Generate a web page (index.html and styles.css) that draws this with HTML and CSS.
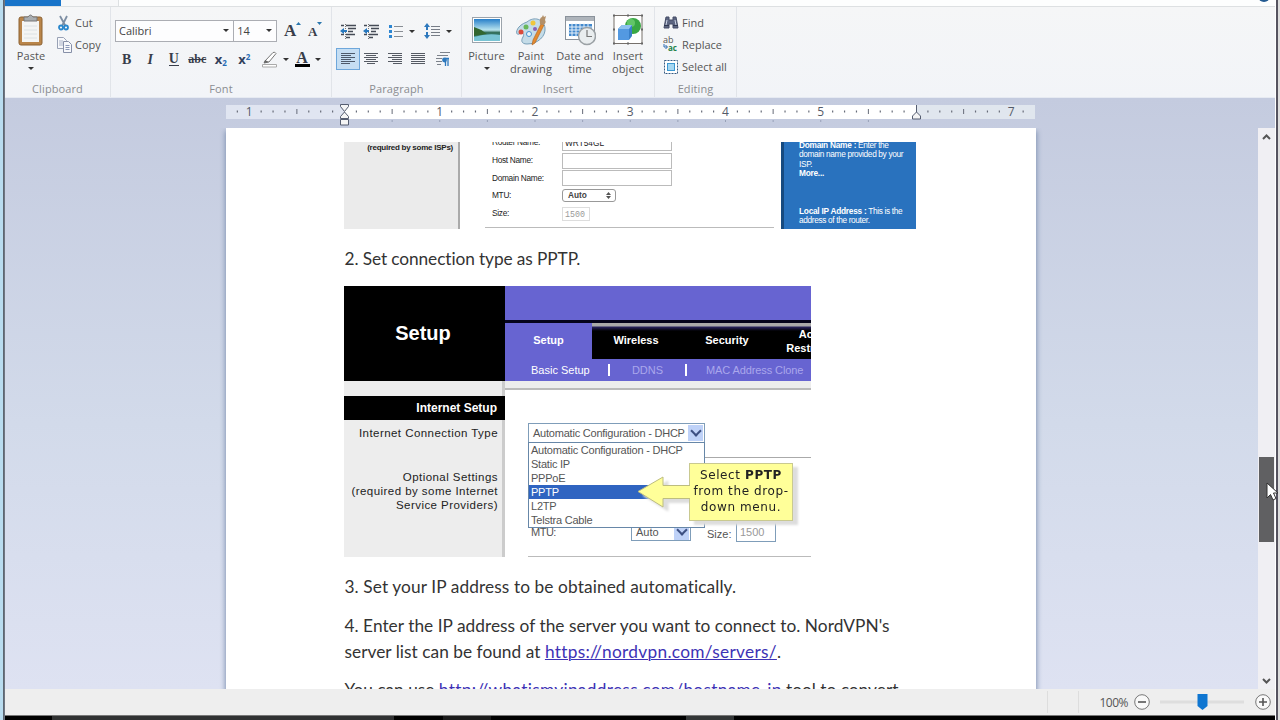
FILE: index.html
```html
<!DOCTYPE html>
<html lang="en">
<head>
	<meta charset="UTF-8">
	<title>Document</title>
	<link rel="stylesheet" href="styles.css">
</head>
<body>
	<div class="desktop">
		<div class="window">
			<div class="tabs"><span class="file-tab"></span><span class="home-tab"></span><span class="help"></span></div>
			<div class="ribbon">
				<div class="group clipboard">
					<div class="tools">
						<div class="big paste">
							<svg width="28" height="32" viewBox="0 0 28 32"><rect x="2" y="3" width="23" height="28" rx="2" fill="#b9854a" stroke="#8d6233"/><rect x="5" y="7" width="17" height="21" fill="#f4f5f4"/><path d="M7 12h13M7 16h13M7 20h13M7 24h13" stroke="#dce2e4"/><path d="M7 7V3h4q2.500-4 5 0h4v4z" fill="#a9adb0" stroke="#777"/></svg>
							<span>Paste</span><i class="caret"></i>
						</div>
						<div class="small-list">
							<div class="small"><svg width="16" height="16" viewBox="0 0 16 16"><path d="M3 1l5.500 10M10 1L5 11" stroke="#7d8ea3" stroke-width="1.800" fill="none"/><circle cx="4" cy="12.500" r="2" fill="none" stroke="#2a87cc" stroke-width="1.800"/><circle cx="9" cy="12.500" r="2" fill="none" stroke="#2a87cc" stroke-width="1.800"/></svg><span>Cut</span></div>
							<div class="small"><svg width="16" height="16" viewBox="0 0 16 16"><path d="M.5.500h6l3 3v8h-9z" fill="#f7f8fb" stroke="#98a1b5"/><path d="M2 4h4M2 6h4M2 8h4" stroke="#aab3c8"/><path d="M6.500 4.500h5l3 3v8h-8z" fill="#f7f8fb" stroke="#8790a8"/><path d="M8.500 8.500h4M8.500 10.500h4M8.500 12.500h4" stroke="#8b98b8"/></svg><span>Copy</span></div>
						</div>
					</div>
					<div class="label">Clipboard</div>
				</div>
				<div class="group font">
					<div class="tools">
						<div class="row">
							<div class="combo family">Calibri<i class="caret"></i></div>
							<div class="combo size">14<i class="caret"></i></div>
							<div class="btn grow"><b class="serif">A</b><svg width="5" height="3" viewBox="0 0 5 3"><path d="M0 3L2.500 0 5 3z" fill="#2a76ad"/></svg></div>
							<div class="btn shrink"><b class="serif">A</b><svg width="5" height="3" viewBox="0 0 5 3"><path d="M0 0h5L2.500 3z" fill="#2a76ad"/></svg></div>
						</div>
						<div class="row">
							<div class="btn serif"><b>B</b></div>
							<div class="btn serif"><b><i>I</i></b></div>
							<div class="btn serif under"><b>U</b></div>
							<div class="btn serif strike">abc</div>
							<div class="btn script"><b>x</b><sub>2</sub></div>
							<div class="btn script"><b>x</b><sup>2</sup></div>
							<div class="btn pen"><svg width="17" height="17" viewBox="0 0 17 17"><path d="M4 10L12 1.500q2-1 3 1L8 11l-5 1z" fill="#fff" stroke="#777"/><path d="M4 9l4 2-5 1z" fill="#666"/><path d="M1.500 13.500h14v2.500h-14z" fill="#fff" stroke="#aaa"/></svg><i class="caret"></i></div>
							<div class="btn color"><b class="serif">A</b><i class="caret"></i></div>
						</div>
					</div>
					<div class="label">Font</div>
				</div>
				<div class="group paragraph">
					<div class="tools">
						<div class="row">
							<div class="btn"><svg width="16" height="15" viewBox="0 0 16 15"><path d="M1 1.500h3M6 1.500h10M8 4.500h8M8 7.500h5M6 10.500h9M1 10.500h3M6 13.500h4" stroke="#454b56" stroke-width="1.400"/><path d="M5.500 0v15" stroke="#777" stroke-dasharray="1 1"/><path d="M0 7l4-3v2h3v2H4v2z" fill="#2878bd"/></svg></div>
							<div class="btn"><svg width="16" height="15" viewBox="0 0 16 15"><path d="M1 1.500h3M6 1.500h10M8 4.500h8M8 7.500h5M6 10.500h9M1 10.500h3M6 13.500h4" stroke="#454b56" stroke-width="1.400"/><path d="M5.500 0v15" stroke="#777" stroke-dasharray="1 1"/><path d="M0 7l4-3v2h2v2H4v2z" fill="#2878bd"/></svg></div>
							<div class="btn list"><svg width="15" height="15" viewBox="0 0 15 15"><path d="M1 2.500h3M1 7.500h3M1 12.500h3" stroke="#2d86d2" stroke-width="3"/><path d="M6 2.500h9M6 7.500h9M6 12.500h9" stroke="#888d94"/></svg><i class="caret"></i></div>
							<div class="btn spacing"><svg width="16" height="16" viewBox="0 0 16 16"><path d="M3 0l3 4H4v8h2l-3 4-3-4h2V4H0z" fill="#2d78bd"/><path d="M1 8h4" stroke="#f4f5f8" stroke-width="2"/><path d="M7 3.500h9M7 6.500h9M7 9.500h9M7 12.500h9" stroke="#777d87"/></svg><i class="caret"></i></div>
						</div>
						<div class="row">
							<div class="btn active"><svg width="14" height="12" viewBox="0 0 14 12"><path d="M0 .5h14M0 2.500h10M0 4.500h14M0 6.500h10M0 8.500h14M0 10.500h9" stroke="#4d5a6b"/></svg></div>
							<div class="btn"><svg width="14" height="12" viewBox="0 0 14 12"><path d="M0 .5h14M2 2.500h10M0 4.500h14M2 6.500h10M0 8.500h14M3 10.500h8" stroke="#555a63"/></svg></div>
							<div class="btn"><svg width="14" height="12" viewBox="0 0 14 12"><path d="M0 .5h14M4 2.500h10M0 4.500h14M4 6.500h10M0 8.500h14M5 10.500h9" stroke="#555a63"/></svg></div>
							<div class="btn"><svg width="14" height="12" viewBox="0 0 14 12"><path d="M0 .5h14M0 2.500h14M0 4.500h14M0 6.500h14M0 8.500h14M0 10.500h14" stroke="#555a63"/></svg></div>
							<div class="btn pilcrow"><svg width="14" height="15" viewBox="0 0 14 15"><path d="M4 .5h10M1 3.500h11M0 6.500h6M0 9.500h6M1 12.500h4" stroke="#7c828b"/><path d="M12 6v8M9.500 6v8M13 6.500H9" stroke="#2d78bd" stroke-width="1.300"/><circle cx="8.500" cy="8" r="2.400" fill="#2d78bd"/></svg></div>
						</div>
					</div>
					<div class="label">Paragraph</div>
				</div>
				<div class="group insert">
					<div class="tools">
						<div class="big picture">
							<svg width="30" height="32" viewBox="0 0 30 32"><defs><linearGradient id="sky" x2="0" y2="1"><stop offset="0" stop-color="#277fc9"/><stop offset=".5" stop-color="#b9e4ef"/><stop offset=".62" stop-color="#2f6a54"/><stop offset="1" stop-color="#5eb7ca"/></linearGradient></defs><rect x=".5" y="3.500" width="29" height="25" fill="#fff" stroke="#9ba3ab"/><rect x="2" y="5" width="26" height="22" fill="url(#sky)"/><path d="M2 13q7 2 13 7l-13 2z" fill="#32662f"/><path d="M2 23q13-4 26-2v6H2z" fill="#79c4d4"/></svg>
							<span>Picture</span><i class="caret"></i>
						</div>
						<div class="big paint">
							<svg width="32" height="32" viewBox="0 0 32 32"><path d="M12 8C19 2 29 5 30 14c1 8-7 16-18 16-6 0-6-4-4-7 2-4-1-5-4-3-4 2-4-8 8-12z" fill="#c4dce8" stroke="#789eb7"/><circle cx="11" cy="13" r="2.500" fill="#69b85b"/><circle cx="18" cy="9" r="2.500" fill="#f0c63c"/><circle cx="6" cy="18" r="2.500" fill="#db4a3a"/><circle cx="14" cy="20" r="2.500" fill="#eaf5fb" stroke="#4893ce"/><circle cx="20" cy="15" r="2" fill="#8a5fb5"/><path d="M26 10l3 1-9 18-3 2 1-5z" fill="#e58a2e" stroke="#a8601d" stroke-width=".6"/><path d="M25 10q-1-6 2-7l1-2 1 2 2-1-1 4q2 3-2 5z" fill="#b39069"/></svg>
							<span>Paint<br>drawing</span>
						</div>
						<div class="big date">
							<svg width="32" height="32" viewBox="0 0 32 32"><rect x="1.500" y="2.500" width="29" height="23" fill="#fff" stroke="#8a929b"/><rect x="2" y="3" width="28" height="4" fill="#aeb4bb"/><path d="M5 10h23v12H5z" fill="#4389cd"/><path d="M4 13h25M4 16h25M4 19h25M8 9v14M12 9v14M16 9v14M20 9v14M24 9v14" stroke="#e7f1fa"/><circle cx="23" cy="22" r="8.500" fill="#e9edef" stroke="#9ba1a5" stroke-width="1.500"/><path d="M23 16v6.500h5" fill="none" stroke="#777" stroke-width="1.200"/></svg>
							<span>Date and<br>time</span>
						</div>
						<div class="big object">
							<svg width="32" height="32" viewBox="0 0 32 32"><rect x="2" y="1.500" width="28" height="28" fill="#fff" stroke="#76706b"/><circle cx="21" cy="12" r="8" fill="#39a744"/><circle cx="19" cy="9" r="4" fill="#62c568"/><path d="M6 15l4-4h10v11l-3 4H6z" fill="#397fc8"/><path d="M6 15h11v11H6z" fill="#5399e1"/><path d="M6 15l4-4h10l-3 4z" fill="#8dc1ef"/><path d="M1 .500h2v2H1zM29 .500h2v2h-2zM1 28.500h2v2H1zM29 28.500h2v2h-2zM15 .500h2v2h-2zM15 28.500h2v2h-2zM1 14.500h2v2H1zM29 14.500h2v2h-2z" fill="#666"/></svg>
							<span>Insert<br>object</span>
						</div>
					</div>
					<div class="label">Insert</div>
				</div>
				<div class="group editing">
					<div class="tools small-list">
						<div class="small"><svg width="16" height="16" viewBox="0 0 16 16"><path d="M3 2h3v3h4V2h3l2 11h-5v-4H6v4H1z" fill="#5c6581" stroke="#444c66"/><path d="M4 5L3 10M12 5l1 5" stroke="#cdd5e5"/><path d="M1 10.500h5M10 10.500h5" stroke="#303850"/></svg><span>Find</span></div>
						<div class="small"><span class="ab-ac"><span>ab</span><span class="ac"><svg width="5" height="6" viewBox="0 0 5 6"><path d="M1 0v3h3M2.500 1l2 2-2 2" fill="none" stroke="#2d6bb0"/></svg><b>ac</b></span></span><span>Replace</span></div>
						<div class="small"><svg width="16" height="16" viewBox="0 0 16 16"><rect x="1.500" y="1.500" width="13" height="13" fill="#fff" stroke="#355a82" stroke-dasharray="2 1"/><rect x="4.500" y="4.500" width="7" height="7" fill="#a5d7f2" stroke="#3b97d0"/></svg><span>Select all</span></div>
					</div>
					<div class="label">Editing</div>
				</div>
			</div>
			<div class="workspace">
				<div class="editor">
					<svg class="ruler" id="ruler" width="810" height="24"></svg>
					<div class="page">
						<div class="shot basic">
							<div class="side">(required by some ISPs)</div>
							<div class="fields">
								<div class="field"><span>Router Name:</span><span class="input">WRT54GL</span></div>
								<div class="field"><span>Host Name:</span><span class="input"></span></div>
								<div class="field"><span>Domain Name:</span><span class="input"></span></div>
								<div class="field"><span>MTU:</span><span class="auto">Auto<svg width="5" height="7" viewBox="0 0 5 7"><path d="M0 3L2.500 0 5 3zM0 4h5L2.500 7z" fill="#555"/></svg></span></div>
								<div class="field"><span>Size:</span><span class="input mono">1500</span></div>
							</div>
							<div class="tips">
								<p><b>Domain Name :</b> Enter the<br>domain name provided by your<br>ISP.<br><b>More...</b></p>
								<p><b>Local IP Address :</b> This is the<br>address of the router.</p>
							</div>
						</div>
						<p class="step-2">2. Set connection type as PPTP.</p>
						<div class="shot router">
							<div class="head">
								<div class="title">Setup</div>
								<div class="nav">
									<div class="banner"></div>
									<div class="main-nav"><span class="on">Setup</span><span class="wireless">Wireless</span><span class="security">Security</span><span class="access">Access<br>Restrictions</span></div>
									<div class="sub-nav"><span class="basic-tab">Basic Setup</span><i></i><span class="ddns">DDNS</span><i></i><span class="mac">MAC Address Clone</span></div>
								</div>
							</div>
							<div class="content">
								<div class="left">
									<h4>Internet Setup</h4>
									<p>Internet Connection Type</p>
									<p class="optional">Optional Settings<br>(required by some Internet<br>Service Providers)</p>
								</div>
								<div class="right">
									<div class="select type"><span>Automatic Configuration - DHCP</span><i class="arrow"></i></div>
									<hr>
									<div class="mtu"><span class="mtu-name">MTU:</span><div class="select"><span>Auto</span><i class="arrow"></i></div><span class="size-name">Size:</span><span class="size-value">1500</span></div>
									<ul class="menu">
										<li>Automatic Configuration - DHCP</li>
										<li>Static IP</li>
										<li>PPPoE</li>
										<li class="picked">PPTP</li>
										<li>L2TP</li>
										<li>Telstra Cable</li>
									</ul>
									<div class="callout">
										<svg width="52" height="34" viewBox="0 0 52 34"><path d="M0 15.500L25 1v8.500h27v13H25V31z" fill="#ffff99" stroke="#bdbd80"/><path d="M51 10h1v12h-1z" fill="#ffff99"/></svg>
										<div>Select <b>PPTP</b><br>from the drop-<br>down menu.</div>
									</div>
								</div>
							</div>
						</div>
						<p class="step-3">3. Set your IP address to be obtained automatically.</p>
						<p class="step-4">4. Enter the IP address of the server you want to connect to. NordVPN's<br>server list can be found at <a href="https://nordvpn.com/servers/">https://nordvpn.com/servers/</a>.</p>
						<p class="tool">You can use <a href="#">http://whatismyipaddress.com/hostname-ip</a> tool to convert</p>
					</div>
				</div>
				<div class="scrollbar">
					<svg width="9" height="6" viewBox="0 0 9 6"><path d="M1 5l3.500-3.500L8 5" fill="none" stroke="#555" stroke-width="2"/></svg>
					<div class="thumb"></div>
					<svg width="9" height="6" viewBox="0 0 9 6"><path d="M1 1l3.500 3.500L8 1" fill="none" stroke="#555" stroke-width="2"/></svg>
				</div>
			</div>
			<div class="status">
				<i></i><i></i>
				<span class="zoom-value">100%</span>
				<svg width="16" height="16" viewBox="0 0 16 16"><circle cx="8" cy="8" r="7.300" fill="#f9f9f9" stroke="#777"/><path d="M4 8h8" stroke="#555" stroke-width="1.600"/></svg>
				<svg class="slider" width="84" height="18" viewBox="0 0 84 18"><path d="M0 7.500h84v3H0z" fill="#dedede"/><path d="M37.500 1h10v12l-5 4-5-4z" fill="#0f76d1"/></svg>
				<svg width="16" height="16" viewBox="0 0 16 16"><circle cx="8" cy="8" r="7.300" fill="#f9f9f9" stroke="#777"/><path d="M4 8h8M8 4v8" stroke="#555" stroke-width="1.600"/></svg>
			</div>
			<div class="taskbar"></div>
		</div>
		<svg class="pointer" width="14" height="20" viewBox="0 0 14 20"><path d="M1 1v15l3.500-3.500L7 18l3-1.500L7.500 11H12z" fill="#fff" stroke="#333"/></svg>
	</div>
	<script>
		(function() {
			var ruler = document.querySelector('#ruler');
			var inch = 95.25;
			var zero = 118.5;
			var labels = { '-1': 1, 1: 1, 2: 2, 3: 3, 4: 4, 5: 5, 7: 7 };
			var html = '<path d="M0 0h118.500v14H0z" fill="#e0e5f1"/><path d="M118.500 0h572v14h-572z" fill="#fff"/><path d="M690 0h119v14H690z" fill="#e0e6ee"/>';

			for (var i = -9; i <= 57; i++) {
				var x = zero + i * inch / 8;
				if (i === 0 || i === 48) continue;
				if (i % 8 === 0) {
					html += `<text x="${x}" y="11" text-anchor="middle">${labels[i / 8]}</text>`;
				} else if (i % 4 === 0) {
					html += `<path d="M${x} 4v5" stroke="#666b78"/>`;
				} else {
					html += `<path d="M${x} 5.500v2" stroke="#666b78" stroke-width="1.200"/>`;
				}
				if (i > 0 && i < 48 && i % 4 === 0) {
					html += `<path d="M${x} 15v2" stroke="#98a1b8"/>`;
				}
			}
			// indent markers
			html += '<path d="M114.500-.5h8v2l-4 5-4-5zM114.500 13.500v-2l4-4.500 4 4.500v2zM114.500 14.500h8v5.500h-8z" fill="#f5f5f5" stroke="#555d70"/>';
			html += '<path d="M690.500 0v7M686.500 14v-3l4-4 4 4v3z" fill="#f5f5f5" stroke="#555d70"/>';
			ruler.innerHTML = html;
		})();
	</script>
</body>
</html>
```
FILE: styles.css
```css
* {
	box-sizing: border-box;
}
body {
	margin: 0;
	overflow: hidden;
	font: 12px/13px "Open Sans", "Noto Sans", sans-serif;
	color: #555;
}
p,
ul,
h4,
hr {
	margin: 0;
	padding: 0;
	border: 0;
}
li {
	list-style: none;
}
svg {
	display: block;
	flex: none;
}
.desktop {
	position: relative;
	width: 1280px;
	height: 720px;
	padding-left: 5px;
	background: linear-gradient(90deg, #b9dcef 3px, #555d68 3px, #777f8b 5px, #fff 5px, #fff 1276px, #55535f 1276px, #55535f 1278px, #ddd 1278px);
}
.window {
	display: flex;
	flex-direction: column;
	width: 1270px;
	height: 720px;
}
.tabs {
	display: flex;
	height: 7px;
	overflow: hidden;
	background: #fdfefe;
	border-bottom: 1px solid #dde0e2;
}
.file-tab {
	width: 56px;
	background: #1874c9;
}
.home-tab {
	width: 58px;
	border-right: 1px solid #dde0e2;
	background: #f7f8f9;
}
.help {
	width: 12px;
	height: 12px;
	margin: -10px 5px 0 auto;
	border-radius: 50%;
	background: #235a91;
}
/* ribbon */
.ribbon {
	display: flex;
	height: 91px;
	background: linear-gradient(#f5f6f7, #f2f4f8);
	border-bottom: 1px solid #e6eaf2;
}
.group {
	display: flex;
	flex-direction: column;
	border-right: 1px solid #e1e4e9;
}
.group .tools {
	display: flex;
	height: 75px;
}
.clipboard { width: 106px; }
.font { width: 221px; }
.paragraph { width: 130px; }
.insert { width: 193px; }
.editing { width: 82px; }
.label {
	text-align: center;
	font-size: 11px;
	line-height: 13px;
	letter-spacing: .1px;
	color: #8b8d91;
}
.caret {
	border: 3px solid transparent;
	border-top-color: #333;
	border-bottom: 0;
}
.big {
	display: flex;
	flex-direction: column;
	align-items: center;
	padding-top: 7px;
	text-align: center;
	font-size: 11px;
	letter-spacing: .1px;
	white-space: nowrap;
}
.big span {
	margin-top: 3px;
}
.big .caret {
	margin-top: 5px;
}
.insert .tools {
	padding-left: 1px;
}
.paste { width: 52px; }
.picture { width: 47px; }
.paint { width: 42px; }
.date { width: 56px; }
.object { width: 40px; }
.small-list {
	padding-top: 4px;
}
.group .tools.small-list {
	flex-direction: column;
	padding: 4px 0 0 8px;
}
.small {
	display: flex;
	flex: none;
	align-items: center;
	height: 22px;
	gap: 2px;
	font-size: 11px;
	white-space: nowrap;
}
.small > svg {
	position: relative;
	top: 1px;
}
.editing .small {
	gap: 3px;
}
.ab-ac {
	width: 16px;
	font-size: 9px;
	line-height: 8px;
}
.ab-ac > span {
	display: block;
}
.ab-ac .ac {
	display: flex;
}
.ab-ac b {
	color: #24834a;
	font-size: 8px;
}
.font .tools,
.paragraph .tools {
	flex-direction: column;
	padding: 13px 4px 0;
	gap: 6px;
}
.row {
	display: flex;
	height: 22px;
}
.combo {
	display: flex;
	align-items: center;
	justify-content: space-between;
	height: 22px;
	padding: 0 4px 2px 3px;
	border: 1px solid #abadb3;
	background: #fdfdfe;
	font-size: 11px;
	color: #444;
}
.family { width: 120px; }
.size {
	width: 43px;
	border-left: 0;
}
.btn {
	display: flex;
	flex: none;
	align-items: center;
	justify-content: center;
	width: 23.5px;
	height: 22px;
}
.serif {
	font-family: "Liberation Serif", serif;
	font-size: 14px;
	color: #383d4a;
}
.grow,
.shrink {
	align-items: flex-start;
	padding-top: 2px;
}
.grow {
	margin-left: 4px;
}
.grow b { font-size: 17px; line-height: 17px; }
.shrink { margin-left: -1px; }
.shrink b { font-size: 13px; line-height: 19px; }
.under b {
	border-bottom: 1px solid #383d4a;
	line-height: 12px;
}
.strike {
	font-size: 12px;
	font-weight: bold;
	text-decoration: line-through;
}
.script {
	font-size: 13px;
	color: #33415c;
}
.script sub,
.script sup {
	font-size: 8px;
	line-height: 8px;
	font-weight: bold;
	color: #256ab4;
}
.script sub { margin-top: 7px; }
.script sup { margin-top: -5px; }
.pen,
.color {
	width: 33px;
	gap: 5px;
}
.pen {
	margin-left: 2px;
}
.color b {
	width: 15px;
	border-bottom: 3px solid #000;
	font-size: 16px;
	line-height: 13px;
	text-align: center;
}
.paragraph .btn .caret {
	margin-left: 6px;
}
.paragraph .list {
	width: 34px;
	margin-left: 1px;
}
.paragraph .spacing {
	width: 35px;
	margin-left: 2px;
}
.active {
	border: 1px solid #6ea7db;
	background: #c5def3;
}
.pilcrow {
	margin-left: 1px;
}
/* document area */
.workspace {
	display: flex;
	height: 591px;
	background: linear-gradient(#c4cbdf, #d2daea 55%, #dee2f2);
}
.editor {
	width: 1253px;
	padding: 7px 0 0 221px;
}
.ruler {
	overflow: visible;
	height: 23px;
	font: 12px "Open Sans", sans-serif;
}
.ruler text {
	fill: #555b68;
}
.page {
	width: 810px;
	height: 561px;
	padding: 14px 0 0 118px;
	overflow: hidden;
	background: #fff;
	box-shadow: 0 4px 5px 1px #8496b4;
	clip-path: inset(0 -10px);
	font: 17.3px/26px Lato, Carlito, sans-serif;
	font-variant-ligatures: none;
	color: #333;
}
.page > p {
	padding-left: .5px;
	white-space: nowrap;
}
.page a {
	color: #3d32b5;
	letter-spacing: .3px;
	text-decoration: underline;
	text-decoration-thickness: 1px;
}
.step-2 { margin: 17px 0 14px; letter-spacing: -.1px; }
.step-3 { margin: 17px 0 13px; letter-spacing: .1px; }
.step-4 { margin-bottom: 12px; letter-spacing: .03px; }
.shot {
	overflow: hidden;
	font-family: "Liberation Sans", sans-serif;
}
.basic {
	display: flex;
	width: 572px;
	height: 87px;
	font-size: 8.3px;
	line-height: 9px;
	color: #222;
}
.basic .side {
	width: 116px;
	padding: 1px 5px 0 0;
	border-right: 2px solid #aaa;
	background: #ebebeb;
	font-weight: bold;
	font-size: 8px;
	letter-spacing: -.25px;
	text-align: right;
	white-space: nowrap;
}
.fields {
	width: 289px;
	height: 86px;
	margin: 0 7px 0 25px;
	border-bottom: 1px solid #bbb;
}
.field {
	display: flex;
	align-items: center;
	height: 17.7px;
	padding-left: 7px;
}
.field:first-child {
	margin-top: -8px;
}
.field > span:first-child {
	width: 70px;
	letter-spacing: -.3px;
}
.input {
	width: 110px;
	height: 16px;
	padding: 3px 2px;
	border: 1px solid #bbb;
	background: #fff;
}
.auto {
	display: flex;
	align-items: center;
	justify-content: space-between;
	width: 54px;
	height: 13px;
	padding: 0 4px 0 5px;
	border: 1px solid #999;
	border-radius: 3px;
	font-weight: bold;
	color: #444;
}
.mono {
	width: 28px;
	height: 14px;
	padding: 2px;
	border-color: #ddd;
	font-family: "Liberation Mono", monospace;
	color: #999;
}
.tips {
	width: 135px;
	padding-left: 15px;
	border-left: 3px solid #164a80;
	background: #2972be;
	font-size: 8.3px;
	line-height: 9.4px;
	letter-spacing: -.35px;
	color: #fff;
	white-space: nowrap;
}
.tips p:first-child {
	margin-top: -1px;
}
.tips p + p {
	margin-top: 28px;
}
.tips b {
	letter-spacing: -.25px;
}
/* router screenshot */
.router {
	width: 467px;
	height: 271px;
	font-size: 11px;
	line-height: 14px;
	background: #fff;
}
.head {
	display: flex;
	height: 95px;
	color: #fff;
}
.title {
	width: 161px;
	background: #000;
	font-size: 20px;
	font-weight: bold;
	line-height: 95px;
	text-align: center;
	padding-right: 3px;
}
.nav {
	display: flex;
	flex-direction: column;
	width: 306px;
	background: #6764d1;
}
.banner {
	height: 37px;
	border-bottom: 3px solid #05041c;
}
.main-nav {
	display: flex;
	height: 36px;
	font-weight: bold;
	line-height: 35px;
	text-align: center;
}
.main-nav span {
	flex: none;
	background: linear-gradient(#aaa 3px, #28235f 4px, #000 8px);
}
.main-nav .on {
	width: 87px;
	background: none;
}
.wireless { width: 88px; }
.security { width: 94px; }
.main-nav .access {
	width: 88px;
	padding-top: 4px;
	line-height: 14px;
}
.sub-nav {
	display: flex;
	align-items: center;
	height: 22px;
}
.sub-nav i {
	width: 2px;
	height: 12px;
	background: #fff;
}
.basic-tab {
	width: 103px;
	padding-left: 26px;
}
.ddns,
.mac {
	color: #aaa7ec;
}
.ddns {
	width: 75px;
	text-align: center;
}
.mac {
	padding-left: 19px;
	letter-spacing: -.1px;
	white-space: nowrap;
}
.content {
	display: flex;
	height: 176px;
	background: #ededed;
}
.left {
	width: 161px;
	padding-top: 15px;
	border-right: 3px solid #ccc;
	color: #222;
	text-align: right;
	white-space: nowrap;
}
.left p {
	padding-right: 4px;
	font-size: 11.5px;
	letter-spacing: .45px;
}
.left h4 {
	height: 24px;
	margin: 0 -3px 6px 0;
	padding-right: 8px;
	background: #000;
	color: #fff;
	font-size: 12px;
	line-height: 24px;
}
.left .optional {
	margin-top: 30px;
}
.right {
	position: relative;
	width: 306px;
	margin-top: 7px;
	padding: 33px 0 0 23px;
	border-top: 2px solid #bbb;
	background: #fff;
	color: #555;
}
.right hr {
	height: 1px;
	margin: 14px 0 64px;
	background: #aaa;
}
.select {
	display: flex;
	align-items: center;
	justify-content: space-between;
	height: 20px;
	padding: 1px 1px 1px 4px;
	border: 1px solid #7f9db9;
	background: #fff;
	white-space: nowrap;
}
.type {
	width: 177px;
	letter-spacing: -.22px;
}
.arrow {
	display: flex;
	align-items: center;
	justify-content: center;
	width: 15px;
	height: 16px;
	background: #bfd2f8;
}
.arrow::before {
	content: '';
	width: 6px;
	height: 6px;
	margin-top: -4px;
	border: solid #3d5082;
	border-width: 0 2px 2px 0;
	transform: rotate(45deg);
}
.mtu {
	display: flex;
	height: 35px;
	border-bottom: 1px solid #bbb;
	line-height: 18px;
}
.mtu-name {
	width: 103px;
	padding: 1px 0 0 3px;
	letter-spacing: -.5px;
}
.mtu .select {
	width: 60px;
	height: 19px;
}
.size-name {
	width: 45px;
	padding: 3px 0 0 16px;
}
.size-value {
	width: 40px;
	height: 20px;
	padding-left: 3px;
	border: 1px solid #7f9db9;
	color: #999;
}
.menu {
	position: absolute;
	left: 23px;
	top: 52px;
	width: 177px;
	height: 86px;
	border: 1px solid #6787a8;
	background: #fff;
	letter-spacing: -.22px;
	white-space: nowrap;
}
.menu li {
	height: 14px;
	padding-left: 2px;
}
.menu .picked {
	background: #2f64c1;
	color: #fff;
}
.callout {
	position: absolute;
	left: 133px;
	top: 73px;
	display: flex;
	filter: drop-shadow(5px 4px 1px #ddd);
}
.callout svg {
	z-index: 1;
	margin: 13px -1px 0 0;
}
.callout div {
	width: 104px;
	height: 58px;
	padding: 3px 0;
	border: 1px solid #c9c990;
	background: #ffff99;
	color: #222;
	font: 12px/16px "DejaVu Sans", sans-serif;
	letter-spacing: .6px;
	text-align: center;
	white-space: nowrap;
}
.scrollbar {
	display: flex;
	flex-direction: column;
	align-items: center;
	width: 17px;
	margin-top: 30px;
	padding: 6px 0 5px;
	background: #f0eff3;
}
.thumb {
	width: 15px;
	height: 85px;
	margin: 317px 0 auto;
	background: #606062;
}
.pointer {
	position: absolute;
	left: 1266px;
	top: 482px;
}
.status {
	display: flex;
	align-items: center;
	height: 26px;
	padding-left: 1042px;
	background: #eee;
}
.status i {
	width: 31px;
	height: 22px;
	border-left: 1px solid #ddd;
}
.zoom-value {
	width: 34px;
	margin-left: -15px;
	text-align: right;
	letter-spacing: -.5px;
}
.zoom-value + svg {
	margin-left: 6px;
}
.slider {
	margin: 0 11px 0 10px;
}
.taskbar {
	height: 5px;
	border-top: 1px solid #777;
	background: linear-gradient(90deg, #000 47px, #303132 47px, #303132 389px, #000 389px, #000 438px, #1b1b1b 438px, #1b1b1b 486px, #000 486px, #000 681px, #333637 681px, #333637 729px, #000 729px);
}
```
